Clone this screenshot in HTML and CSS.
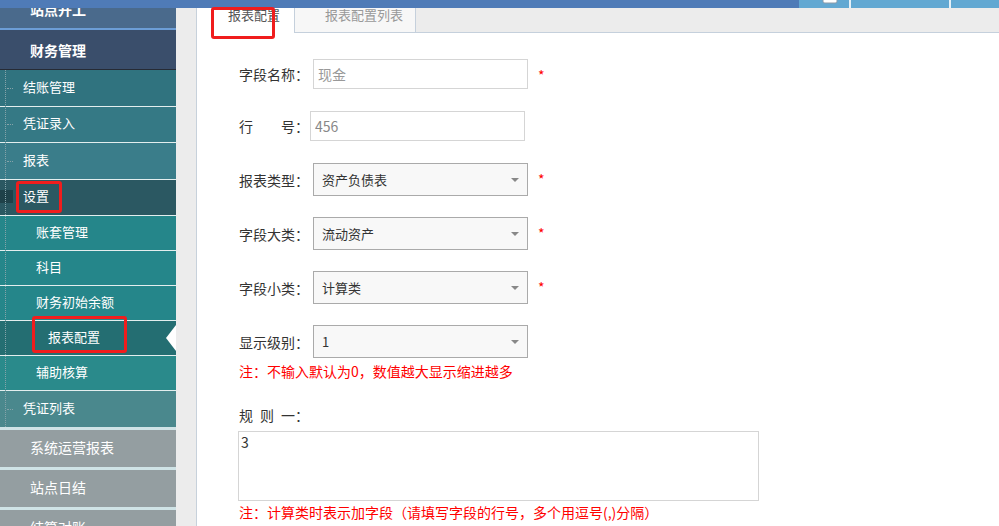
FILE: index.html
```html
<!DOCTYPE html>
<html lang="zh-CN">
<head>
    <meta charset="UTF-8">
    <meta name="viewport" content="width=device-width, initial-scale=1.0">
    <title>报表配置</title>
    <link rel="stylesheet" href="styles.css">
</head>
<body>
    <div class="topbar">
        <div class="topbar-fill"></div>
        <div class="topbar-btn">
            <svg class="topbar-icon" width="16" height="4" viewBox="0 0 16 4">
                <path d="M1 0 V1.2 Q1 3 2.8 3 H13.2 Q15 3 15 1.2 V0" fill="#fff" stroke="#8c9aa8" stroke-width="1"/>
            </svg>
        </div>
        <div class="topbar-btn topbar-btn-wide"></div>
        <div class="topbar-btn topbar-btn-last"></div>
    </div>

    <div class="main">
        <aside class="sidebar">
            <ul class="menu">
                <li class="menu-group group-top">站点开工</li>
                <li class="menu-group group-finance">财务管理</li>
                <li class="menu-tree">
                    <ul>
                        <li class="menu-item tone-1">结账管理</li>
                        <li class="menu-item tone-2">凭证录入</li>
                        <li class="menu-item tone-3">报表</li>
                        <li class="menu-item current">设置<span class="marker"></span></li>
                        <li class="menu-sub">账套管理</li>
                        <li class="menu-sub">科目</li>
                        <li class="menu-sub">财务初始余额</li>
                        <li class="menu-sub active">报表配置</li>
                        <li class="menu-sub soft">辅助核算</li>
                        <li class="menu-item tone-4">凭证列表</li>
                    </ul>
                </li>
                <li class="menu-group group-muted">系统运营报表</li>
                <li class="menu-group group-muted">站点日结</li>
                <li class="menu-group group-muted">结算对账</li>
            </ul>
        </aside>

        <div class="gutter"></div>

        <section class="panel">
            <div class="tabs">
                <div class="tab tab-active">报表配置</div>
                <div class="tab tab-plain">报表配置列表</div>
                <div class="tabs-rest"></div>
            </div>

            <form class="form" onsubmit="return false">
                <div class="row">
                    <span class="label">字段名称：</span>
                    <input class="field" type="text" placeholder="现金">
                    <span class="required">*</span>
                </div>
                <div class="row">
                    <span class="label label-short">行&emsp;&emsp;号：</span>
                    <input class="field" type="text" value="456">
                </div>
                <div class="row row-select">
                    <span class="label">报表类型：</span>
                    <div class="select">资产负债表<svg width="8" height="4" viewBox="0 0 8 4"><path d="M0 0 H8 L4 4 Z" fill="#888"/></svg></div>
                    <span class="required">*</span>
                </div>
                <div class="row row-select">
                    <span class="label">字段大类：</span>
                    <div class="select">流动资产<svg width="8" height="4" viewBox="0 0 8 4"><path d="M0 0 H8 L4 4 Z" fill="#888"/></svg></div>
                    <span class="required">*</span>
                </div>
                <div class="row row-select">
                    <span class="label">字段小类：</span>
                    <div class="select">计算类<svg width="8" height="4" viewBox="0 0 8 4"><path d="M0 0 H8 L4 4 Z" fill="#888"/></svg></div>
                    <span class="required">*</span>
                </div>
                <div class="row row-select row-last">
                    <span class="label">显示级别：</span>
                    <div class="select">1<svg width="8" height="4" viewBox="0 0 8 4"><path d="M0 0 H8 L4 4 Z" fill="#888"/></svg></div>
                </div>
                <p class="note">注：不输入默认为0，数值越大显示缩进越多</p>

                <p class="rule-label">规&ensp;则&ensp;一：</p>
                <textarea class="rule-text">3</textarea>
                <p class="note note-bottom">注：计算类时表示加字段（请填写字段的行号，多个用逗号(,)分隔）</p>
            </form>
        </section>
    </div>

    <!-- annotation marks -->
    <div class="mark mark-tab"></div>
    <div class="mark mark-setting"></div>
    <div class="mark mark-config"></div>
</body>
</html>
```

FILE: styles.css
```css
* {
    margin: 0;
    padding: 0;
    box-sizing: border-box;
    font-family: "Noto Sans CJK SC", "Microsoft YaHei", sans-serif;
}

body {
    width: 999px;
    height: 526px;
    overflow: hidden;
    background: #ececec;
    position: relative;
}

/* top bar */
.topbar {
    display: flex;
    height: 8px;
}

.topbar-fill {
    flex: 1;
    background: #4f7bb7;
}

.topbar-btn {
    position: relative;
    width: 50px;
    background: #62a8d2;
}

.topbar-btn-wide {
    width: 100px;
    border-left: 2px solid #e6f0f7;
}

.topbar-btn-last {
    border-left: 2px solid #e6f0f7;
}

.topbar-icon {
    position: absolute;
    left: 23px;
    top: 0;
}

.main {
    display: flex;
    height: 518px;
}

/* sidebar */
.sidebar {
    position: relative;
    width: 176px;
    flex: none;
    overflow: hidden;
}

.menu,
.menu ul {
    list-style: none;
}

.menu {
    margin-top: -15px;
}

.menu-group {
    display: flex;
    align-items: center;
    padding: 0 0 3px 30px;
    color: #ffffff;
    font-size: 14px;
}

.group-top {
    height: 37px;
    background: #4a6a8c;
    border-bottom: 2px solid #6c9dd6;
    font-weight: bold;
}

.group-finance {
    height: 40px;
    padding-bottom: 0;
    background: #3a4e6b;
    border-bottom: 1px solid #262b35;
    font-weight: bold;
}

.group-muted {
    height: 40px;
    background: #949ea1;
    border-top: 3px solid #cfe3e6;
}

.menu-tree {
    position: relative;
}

.menu-tree::before {
    content: "";
    position: absolute;
    left: 5px;
    top: 0;
    bottom: 0;
    border-left: 1px dotted #86a3a9;
    z-index: 1;
}

.menu-item,
.menu-sub {
    position: relative;
    display: flex;
    align-items: center;
    color: #ffffff;
    font-size: 13px;
    border-bottom: 1px solid #e3eeee;
}

.menu-item {
    height: 36.5px;
    padding: 0 0 3px 23px;
}

.menu-item::before {
    content: "";
    position: absolute;
    left: 7px;
    top: 50%;
    width: 6px;
    border-top: 1px dotted #86a3a9;
}

.tone-1 { background: #30737f; }
.tone-2 { background: #357985; }
.tone-3 { background: #3a7d8a; }

.tone-4 {
    height: 36px;
    background: #4a888d;
    border-bottom: none;
}

.menu-item.current {
    background: #2b5862;
}

.menu-item.current::before {
    display: none;
}

.marker {
    position: absolute;
    left: 0;
    top: 10px;
    width: 13px;
    height: 13px;
    background: #1f4149;
}

.menu-sub {
    height: 35px;
    padding: 0 0 4px 36px;
    background: #25868a;
}

.menu-sub.soft {
    background: #2a8a8b;
}

.menu-sub.active {
    padding-left: 48px;
    background: #246e72;
}

.menu-sub.active::after {
    content: "";
    position: absolute;
    right: 0;
    top: 50%;
    margin-top: -13px;
    border-top: 13px solid transparent;
    border-bottom: 13px solid transparent;
    border-right: 10px solid #ffffff;
}

.gutter {
    width: 20px;
    flex: none;
}

/* content */
.panel {
    flex: 1;
    background: #ffffff;
    border-left: 1px solid #c7d1db;
}

.tabs {
    display: flex;
    height: 25px;
    background: #ececec;
}

.tab {
    height: 25px;
    padding-left: 31px;
    font-size: 13px;
    line-height: 14px;
    color: #999;
    border-bottom: 1px solid #c5d0dc;
}

.tab-active {
    width: 97px;
    background: #ffffff;
    color: #555;
    border-bottom-color: #ffffff;
}

.tab-plain {
    width: 122px;
    padding-left: 30px;
    background: #f7f7f7;
    border-left: 1px solid #c5d0dc;
    border-right: 1px solid #c5d0dc;
}

.tabs-rest {
    flex: 1;
    border-bottom: 1px solid #c5d0dc;
}

.form {
    padding: 26px 0 0 42px;
}

.row {
    display: flex;
    align-items: center;
    margin-bottom: 22px;
}

.row-select {
    margin-bottom: 21px;
}

.row-last {
    margin-bottom: 3px;
}

.label {
    flex: none;
    width: 74px;
    font-size: 14px;
    color: #333;
    white-space: nowrap;
}

.label-short {
    width: 71px;
}

.field {
    width: 215px;
    height: 30px;
    padding: 0 4px;
    border: 1px solid #d5d5d5;
    background: #ffffff;
    font-size: 14px;
    color: #888;
    outline: none;
}

.field::placeholder {
    color: #999;
}

.select {
    display: flex;
    align-items: center;
    justify-content: space-between;
    width: 215px;
    height: 33px;
    padding: 0 8px;
    border: 1px solid #aaa;
    background: #f8f8f8;
    font-size: 13px;
    color: #333;
}

.required {
    align-self: flex-start;
    margin: 9px 0 0 10px;
    font-size: 14px;
    line-height: 14px;
    color: #f00;
}

.note {
    font-size: 14px;
    line-height: 20px;
    color: #f00;
}

.rule-label {
    margin: 24px 0 6px;
    font-size: 14px;
    line-height: 20px;
    color: #333;
}

.rule-text {
    display: block;
    width: 521px;
    height: 70px;
    margin-left: -1px;
    padding: 1px 2px;
    border: 1px solid #d5d5d5;
    font-size: 14px;
    line-height: 18px;
    color: #333;
    resize: none;
    outline: none;
}

.note-bottom {
    margin-top: 1px;
}

/* red annotation boxes */
.mark {
    position: absolute;
    border: 3px solid #f01d1d;
    border-radius: 3px;
}

.mark-tab {
    left: 211px;
    top: 7px;
    width: 64px;
    height: 32px;
}

.mark-setting {
    left: 16px;
    top: 181px;
    width: 46px;
    height: 32px;
}

.mark-config {
    left: 32px;
    top: 316px;
    width: 95px;
    height: 37px;
}
```
